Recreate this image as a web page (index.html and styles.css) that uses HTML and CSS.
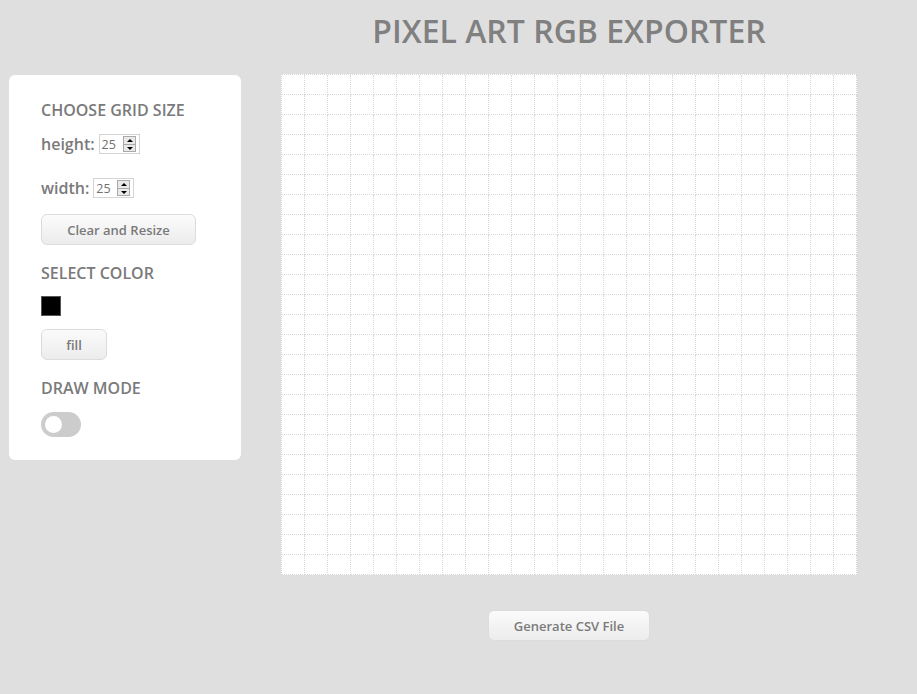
FILE: index.html
```html
<!DOCTYPE html>
<html>
<head>
<meta charset="utf-8">
<title>Pixel Art RGB Exporter</title>
<link rel="stylesheet" href="styles.css">
</head>
<body>
<div class="page">
  <aside class="panel">
    <h2 class="panel-title">CHOOSE GRID SIZE</h2>
    <div class="field">
      <label class="field-label">height:</label>
      <span class="num"><span class="num-val">25</span><span class="spin"><span class="up"></span><span class="down"></span></span></span>
    </div>
    <div class="field field-width">
      <label class="field-label">width:</label>
      <span class="num"><span class="num-val">25</span><span class="spin"><span class="up"></span><span class="down"></span></span></span>
    </div>
    <button class="btn btn-resize">Clear and Resize</button>
    <h2 class="panel-title title-color">SELECT COLOR</h2>
    <div class="swatch"></div>
    <button class="btn btn-fill">fill</button>
    <h2 class="panel-title title-draw">DRAW MODE</h2>
    <div class="toggle"><span class="knob"></span></div>
  </aside>
  <main class="main">
    <h1 class="title">PIXEL ART RGB EXPORTER</h1>
    <div class="grid" id="grid"></div>
    <button class="btn btn-csv">Generate CSV File</button>
  </main>
</div>
<script src="script.js"></script>
</body>
</html>
```
FILE: styles.css
```css
* { box-sizing: border-box; }
html, body { margin: 0; padding: 0; }
body {
  background: #dfdfdf;
  font-family: "Open Sans", "Liberation Sans", sans-serif;
  color: #7a7a7a;
  width: 917px;
  height: 694px;
  overflow: hidden;
}
.page {
  display: flex;
  align-items: flex-start;
  padding-left: 9px;
}
.panel {
  margin-top: 75px;
  width: 232px;
  height: 385px;
  background: #fff;
  border-radius: 6px;
  padding: 23px 32px 0 32px;
  display: flex;
  flex-direction: column;
  align-items: flex-start;
}
.panel-title {
  margin: 0;
  font-size: 16px;
  font-weight: 600;
  line-height: 24px;
  color: #7a7a7a;
}
.field {
  display: flex;
  align-items: center;
  margin-top: 10px;
  height: 24px;
}
.field-width { margin-top: 20px; }
.field-label {
  font-size: 16px;
  font-weight: 600;
  color: #7a7a7a;
  margin-right: 4px;
}
.num {
  display: inline-flex;
  align-items: center;
  border: 1px solid #d4d4d4;
  height: 20px;
  padding: 0 3px 0 1px;
  background: #fff;
}
.num-val {
  font-size: 12.5px;
  color: #707070;
  width: 22px;
  padding-left: 1px;
}
.spin {
  display: flex;
  flex-direction: column;
  width: 13px;
  height: 16px;
  border: 1px solid #aaa;
  background: #e9e9e9;
}
.spin .up, .spin .down {
  flex: 1;
  position: relative;
}
.spin .down { border-top: 1px solid #aaa; }
.spin .up::after, .spin .down::after {
  content: "";
  position: absolute;
  left: 3px;
  top: 2px;
  border-left: 3px solid transparent;
  border-right: 3px solid transparent;
}
.spin .up::after { border-bottom: 3px solid #000; }
.spin .down::after { border-top: 3px solid #000; top: 2px; }
.btn {
  font-family: "Open Sans", "Liberation Sans", sans-serif;
  font-size: 13px;
  font-weight: 600;
  color: #7a7a7a;
  background: linear-gradient(#fbfbfb, #ececec);
  border: 1px solid #dcdcdc;
  border-radius: 6px;
  height: 31px;
  padding: 0;
  cursor: pointer;
}
.btn-resize {
  margin-top: 14px;
  width: 155px;
}
.title-color { margin-top: 16px; }
.swatch {
  margin-top: 11px;
  width: 20px;
  height: 20px;
  background: #000;
  border: 1px solid #555;
}
.btn-fill {
  margin-top: 13px;
  width: 66px;
}
.title-draw { margin-top: 16px; }
.toggle {
  margin-top: 12px;
  width: 40px;
  height: 25px;
  border-radius: 13px;
  background: #cccccc;
  position: relative;
}
.knob {
  position: absolute;
  left: 4px;
  top: 4px;
  width: 17px;
  height: 17px;
  border-radius: 50%;
  background: #fff;
}
.main {
  margin-left: 40px;
  width: 576px;
  display: flex;
  flex-direction: column;
  align-items: center;
}
.title {
  margin: 7px 0 19px 0;
  font-size: 32px;
  font-weight: 600;
  line-height: 48px;
  color: #808080;
  white-space: nowrap;
}
.grid {
  display: grid;
  grid-template-columns: repeat(25, 23px);
  grid-auto-rows: 20px;
  background: #fff;
  border-top: 1px dotted #d8d8d8;
  border-left: 1px dotted #d8d8d8;
}
.cell {
  border-right: 1px dotted #d8d8d8;
  border-bottom: 1px dotted #d8d8d8;
}
.btn-csv {
  margin-top: 35px;
  width: 162px;
}
```
FILE: script.js
```js
var grid = document.getElementById('grid');
for (var i = 0; i < 625; i++) {
  var c = document.createElement('div');
  c.className = 'cell';
  grid.appendChild(c);
}
```
